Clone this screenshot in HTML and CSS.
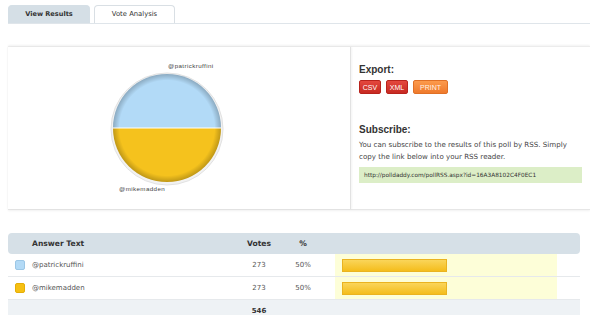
FILE: index.html
```html
<!DOCTYPE html>
<html>
	<head>
		<title>Poll Results</title>
		<link rel="stylesheet" href="styles.css">
	</head>
	<body>
		<div id="tabs">
			<div class="tab active">View Results</div>
			<div class="tab">Vote Analysis</div>
		</div>

		<div id="summary">
			<div class="chart">
				<svg width="342" height="162" viewBox="0 0 342 162">
					<defs>
						<radialGradient id="rim" cx="50%" cy="50%" r="50%">
							<stop offset="88%" stop-color="#000" stop-opacity="0"/>
							<stop offset="100%" stop-color="#000" stop-opacity="0.22"/>
						</radialGradient>
					</defs>
					<circle cx="159" cy="82" r="56" fill="#f2f2f2" stroke="#e2e2e2"/>
					<path d="M105 81 A54 54 0 0 1 213 81 Z" fill="#b2daf7"/>
					<path d="M105 81 A54 54 0 0 0 213 81 Z" fill="#f5c21d"/>
					<circle cx="159" cy="81" r="54" fill="url(#rim)"/>
					<line x1="105" y1="81" x2="213" y2="81" stroke="#fff" stroke-width="1.2"/>
					<text x="160" y="21" class="label">@patrickruffini</text>
					<text x="111" y="144" class="label">@mikemadden</text>
				</svg>
			</div>
			<div class="side">
				<h3>Export:</h3>
				<div class="buttons">
					<span class="btn red">CSV</span>
					<span class="btn red">XML</span>
					<span class="btn orange">PRINT</span>
				</div>
				<h3 class="sub">Subscribe:</h3>
				<p>You can subscribe to the results of this poll by RSS. Simply copy the link below into your RSS reader.</p>
				<div class="rss">http://polldaddy.com/pollRSS.aspx?id=16A3A8102C4F0EC1</div>
			</div>
		</div>

		<table id="results">
			<colgroup>
				<col style="width:22px"><col style="width:205px"><col style="width:48px"><col style="width:40px"><col style="width:12px"><col style="width:222px"><col style="width:23px">
			</colgroup>
			<tr class="head">
				<th></th><th class="answer">Answer Text</th><th>Votes</th><th>%</th><th></th><th></th><th></th>
			</tr>
			<tr>
				<td><span class="swatch blue"></span></td><td class="answer">@patrickruffini</td><td>273</td><td>50%</td><td></td>
				<td class="barcell"><div class="bar" style="width:105px"></div></td><td></td>
			</tr>
			<tr>
				<td><span class="swatch yellow"></span></td><td class="answer">@mikemadden</td><td>273</td><td>50%</td><td></td>
				<td class="barcell"><div class="bar" style="width:105px"></div></td><td></td>
			</tr>
			<tr class="foot">
				<td></td><td></td><td><b>546</b></td><td></td><td></td><td></td><td></td>
			</tr>
		</table>
	</body>
</html>
```

FILE: styles.css
```css
body {
	margin: 0;
	background: #fff;
	font-family: "DejaVu Sans", Verdana, sans-serif;
	color: #444;
	width: 590px;
	overflow: hidden;
}
#tabs {
	display: flex;
	gap: 4px;
	margin: 5px 0 0 8px;
	border-bottom: 1px solid #dfe5ea;
	height: 18px;
}
.tab {
	width: 81px;
	height: 18px;
	box-sizing: border-box;
	border: 1px solid #d9dfe4;
	border-bottom: none;
	border-radius: 4px 4px 0 0;
	font-size: 6.8px;
	line-height: 17px;
	text-align: center;
	color: #333;
	background: #fff;
}
.tab.active {
	width: 82px;
	background: #d5dfe6;
	border-color: #d5dfe6;
	font-size: 6.6px;
	font-weight: bold;
}
#summary {
	display: flex;
	margin: 22px 0 0 8px;
	height: 162px;
	border-top: 1px solid #ececec;
	border-bottom: 1px solid #e6e6e6;
	box-shadow: 0 -1px 2px rgba(0,0,0,0.05), 0 1px 2px rgba(0,0,0,0.06);
}
.chart {
	width: 342px;
	border-right: 1px solid #e2e2e2;
	box-shadow: 1px 0 2px rgba(0,0,0,0.05);
}
.chart svg { display: block; }
.label {
	font-family: "Liberation Sans", Arial, sans-serif;
	font-size: 6.2px;
	letter-spacing: 0.4px;
	fill: #444;
}
.side {
	flex: 1;
	padding: 17px 8px 0 8px;
}
h3 {
	margin: 0;
	font: bold 10px/12px "Liberation Sans", Arial, sans-serif;
	color: #333;
}
h3.sub { margin-top: 30px; }
.buttons {
	display: flex;
	gap: 5px;
	margin-top: 4px;
}
.btn {
	height: 14px;
	box-sizing: border-box;
	border-radius: 2px;
	font: 7px/13px "Liberation Sans", Arial, sans-serif;
	color: #fff;
	text-align: center;
}
.btn.red {
	width: 22px;
	background: linear-gradient(#e4473e, #c72a22);
	border: 1px solid #b8231c;
}
.btn.orange {
	width: 35px;
	background: linear-gradient(#fc9a4c, #ef7a2c);
	border: 1px solid #e07026;
	color: #fff3e6;
}
.side p {
	margin: 3px 0 0;
	max-width: 212px;
	font-size: 7.1px;
	line-height: 12px;
	color: #444;
}
.rss {
	margin-top: 4px;
	height: 16px;
	background: #dceec7;
	padding-left: 5px;
	font-size: 5.8px;
	line-height: 16px;
	color: #333;
}
#results {
	margin: 23px 0 0 8px;
	width: 572px;
	table-layout: fixed;
	border-collapse: separate;
	border-spacing: 0;
	font-size: 7px;
	color: #555;
}
#results td, #results th {
	padding: 0;
	text-align: center;
}
#results .answer {
	text-align: left;
	padding-left: 2px;
}
.head th {
	background: #d6e0e7;
	height: 21px;
	font-size: 7.6px;
	color: #333;
}
.head th:first-child { border-radius: 4px 0 0 4px; }
.head th:last-child { border-radius: 0 4px 4px 0; }
#results tr:not(.head):not(.foot) td {
	height: 22px;
	border-bottom: 1px solid #e6e9ec;
}
#results .barcell {
	background: #fdfed8;
	text-align: left;
	padding-left: 7px;
}
.bar {
	height: 13px;
	box-sizing: border-box;
	background: linear-gradient(#fad55a, #f4bd1c);
	border: 1px solid #eab320;
}
.swatch {
	display: block;
	width: 10px;
	height: 10px;
	margin-left: 7px;
	box-sizing: border-box;
	border-radius: 2px;
}
.swatch.blue { background: #b3daf6; border: 1px solid #9cc7e6; }
.swatch.yellow { background: #f6c013; border: 1px solid #e5ae08; }
.foot td {
	background: #eef2f5;
	height: 22px;
	color: #333;
	font-size: 7px;
}
```
